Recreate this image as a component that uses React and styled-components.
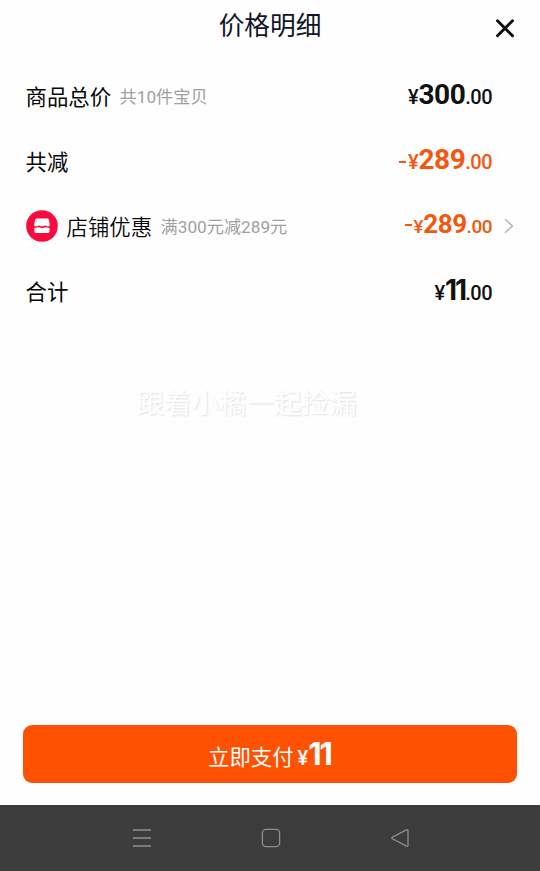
import React from 'react'
import styled, { createGlobalStyle } from 'styled-components'

const rows = [
  { label: '商品总价', note: '共10件宝贝', whole: '300', cents: '.00' },
  { label: '共减', minus: true, whole: '289', cents: '.00', accent: true },
  { label: '店铺优惠', note: '满300元减289元', minus: true, whole: '289', cents: '.00', accent: true, shop: true, light: true, small: true },
  { label: '合计', whole: '11', cents: '.00' },
]

function ShopIcon() {
  return (
    <svg width="32" height="32" viewBox="0 0 32 32">
      <circle cx="16" cy="16" r="15.8" fill="#fb0b3d" />
      <path
        d="M10.800 8.400h10.400c1 0 1.600.6 1.800 1.500l.8 4.800c.1 1-.6 1.600-1.600 1.700-1.200.1-1.900-.8-3-.8s-1.900.8-3.200.8-2-.8-3.200-.8-1.800.9-3 .8c-1-.1-1.700-.7-1.600-1.700l.8-4.800c.2-.9.9-1.500 1.800-1.500z"
        fill="#fff"
      />
      <path
        d="M8.400 17.900c1.500.2 3.200-.7 4.500-.7s1.900.8 3.200.8 2-.8 3.200-.8 2.800.9 4.200.7v3.300c0 1.100-.8 1.900-1.900 1.900H10.300c-1.100 0-1.900-.8-1.900-1.900z"
        fill="#fff"
      />
    </svg>
  )
}

function Price({ minus, whole, cents, accent, small }) {
  return (
    <Amount $accent={accent} $small={small}>
      {minus && <Minus $small={small} />}
      <Yen $small={small}>¥</Yen>
      <Whole $narrow={whole === '11'} $small={small}>{whole}</Whole>
      <Cents $small={small}>{cents}</Cents>
    </Amount>
  )
}

function App() {
  return (
    <Page>
      <GlobalStyle />
      <Header>
        <Title>价格明细</Title>
        <CloseButton aria-label="关闭">
          <svg width="20" height="20" viewBox="0 0 20 20">
            <path d="M2.500 2.800l15 15M17.500 2.800l-15 15" stroke="#0c0c0c" strokeWidth="2.900" strokeLinecap="round" />
          </svg>
        </CloseButton>
      </Header>

      <List>
        {rows.map(row => (
          <Row key={row.label}>
            {row.shop && <IconSlot><ShopIcon /></IconSlot>}
            <Label $light={row.light}>{row.label}</Label>
            {row.note && <Note>{row.note}</Note>}
            <Price {...row} />
            <ArrowSlot>
              {row.shop && (
                <svg width="10" height="16" viewBox="0 0 10 16">
                  <path d="M1 1.200l7.400 6.800L1 14.800" fill="none" stroke="#b3b3b3" strokeWidth="1.500" />
                </svg>
              )}
            </ArrowSlot>
          </Row>
        ))}
      </List>

      <Watermark>跟着小橘一起捡漏</Watermark>

      <Footer>
        <PayButton>
          <PayText>立即支付</PayText>
          <Yen>¥</Yen>
          <Whole $narrow $large>11</Whole>
        </PayButton>
      </Footer>

      <SystemBar>
        <svg width="20" height="20" viewBox="0 0 20 20">
          <path d="M1 2h18M1 10h18M1 18h18" stroke="#8e8e8e" strokeWidth="1.300" />
        </svg>
        <svg width="20" height="20" viewBox="0 0 20 20">
          <rect x="1.400" y="1.400" width="17.200" height="17.200" rx="3.500" fill="none" stroke="#8e8e8e" strokeWidth="1.300" />
        </svg>
        <svg width="20" height="20" viewBox="0 0 20 20">
          <path d="M2.400 9.200L16.500 1.800c.8-.4 1.500 0 1.500.8v14.800c0 .8-.7 1.200-1.500.8L2.400 10.800c-.8-.5-.8-1.100 0-1.600z" fill="none" stroke="#8e8e8e" strokeWidth="1.300" />
        </svg>
      </SystemBar>
    </Page>
  )
}

const GlobalStyle = createGlobalStyle`
  * {
    box-sizing: border-box;
  }
  body {
    margin: 0;
    background: #fff;
    font-family: Roboto, 'Noto Sans CJK SC', sans-serif;
  }
  svg {
    display: block;
  }
  button {
    border: 0;
    padding: 0;
    background: none;
    font: inherit;
    cursor: pointer;
  }
`

const Page = styled.div`
  height: 871px;
  display: flex;
  flex-direction: column;
  background: #fefefe;
  overflow: hidden;
`

const Header = styled.header`
  height: 64px;
  display: grid;
  grid-template-columns: 1fr auto 1fr;
  padding: 0 25px;
`

const Title = styled.h1`
  grid-column: 2;
  margin: 0;
  line-height: 52px;
  font-size: 25.700px;
  font-weight: 400;
  color: #10152a;
`

const CloseButton = styled.button`
  justify-self: end;
  align-self: start;
  margin-top: 18px;
`

const List = styled.div`
  padding-left: 25.500px;
`

const Row = styled.div`
  height: 65px;
  display: flex;
  align-items: center;
`

const IconSlot = styled.div`
  width: 41px;
  padding-bottom: 2px;
`

const Label = styled.span`
  padding-bottom: 2px;
  font-size: 21.400px;
  font-weight: ${({ $light }) => ($light ? 350 : 400)};
  color: #080808;
`

const Note = styled.span`
  margin-left: 8.500px;
  padding-bottom: 2px;
  font-size: 17.200px;
  font-weight: 400;
  color: #a0a0a0;
`

const Amount = styled.div`
  margin-left: auto;
  display: flex;
  align-items: baseline;
  line-height: 30px;
  padding-bottom: ${({ $small }) => ($small ? 3 : 1)}px;
  color: ${({ $accent }) => ($accent ? '#f4570f' : '#111')};
`

const Minus = styled.i`
  width: 7px;
  height: 2px;
  margin-right: 2px;
  align-self: center;
  transform: translateY(${({ $small }) => ($small ? '0' : '1px')});
  background: currentColor;
`

const Yen = styled.span`
  margin-right: 0.500px;
  font-size: ${({ $small }) => ($small ? 18.5 : 20)}px;
  font-weight: 500;
  letter-spacing: -0.500px;
`

const Whole = styled.span`
  font-family: ${({ $narrow }) => ($narrow ? 'Inter' : 'Roboto')}, sans-serif;
  font-size: ${({ $small, $large }) => ($small ? 26 : $large ? 31 : 28)}px;
  font-weight: 700;
  letter-spacing: ${({ $narrow, $large }) => ($narrow ? ($large ? '-2px' : '-2px') : '-0.500px')};
`

const Cents = styled.span`
  font-size: ${({ $small }) => ($small ? 19 : 20)}px;
  font-weight: 500;
  letter-spacing: -0.500px;
`

const ArrowSlot = styled.div`
  width: 48px;
  padding: 0 0 2px 12px;
`

const Watermark = styled.div`
  margin: 58px 0 0 136.500px;
  line-height: 44px;
  font-size: 27.500px;
  font-weight: 400;
  color: #fff;
  text-shadow: 1px 1px 2px rgba(0, 0, 0, 0.12);
`

const Footer = styled.footer`
  margin-top: auto;
  padding: 0 23.500px 22.500px 22.500px;
`

const PayButton = styled.button`
  width: 100%;
  height: 57.500px;
  display: flex;
  align-items: baseline;
  justify-content: center;
  line-height: 58px;
  border-radius: 9px;
  background: #ff5102;
  color: #fff;
`

const PayText = styled.span`
  margin-right: 4px;
  font-size: 21.400px;
  font-weight: 400;
`

const SystemBar = styled.nav`
  height: 66px;
  flex: none;
  display: flex;
  justify-content: space-between;
  align-items: center;
  padding: 0 130px 0 132px;
  background: #3c3c3c;
`

export default App
